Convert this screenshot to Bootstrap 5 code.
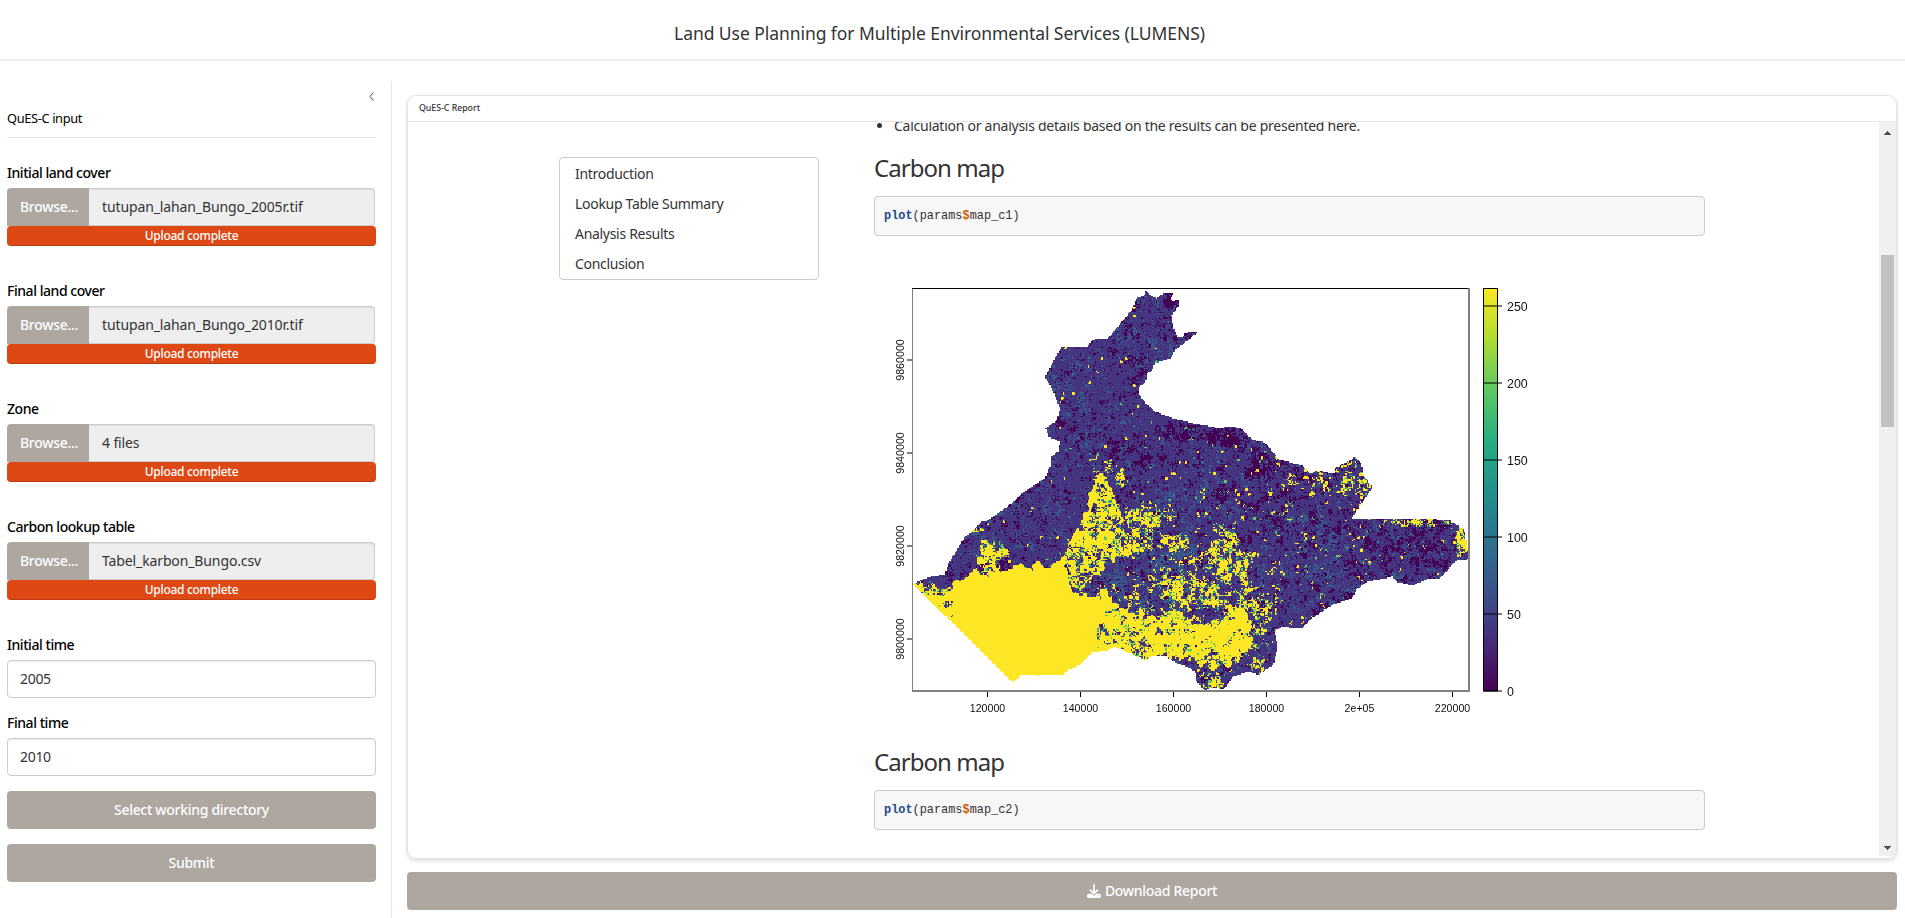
<!DOCTYPE html>
<html lang="en">
<head>
<meta charset="utf-8">
<title>LUMENS</title>
<link href="https://cdn.jsdelivr.net/npm/bootstrap@5.3.0/dist/css/bootstrap.min.css" rel="stylesheet">
<style>
html,body{height:100%;overflow:hidden}
body{font-family:"Noto Sans","Open Sans",sans-serif;font-size:14px;line-height:20px;color:#333;background:#fff;letter-spacing:-.3px}
.app-title{height:61px;padding:7px 26px 0 0;border-bottom:2px solid #e9ecef;font-size:17.5px;letter-spacing:-.06px}
.side{width:392px;margin-top:20px;padding:0 15px 0 7px;border-right:1px solid #e6e6e6;color:#000}
.toggle-row{height:27px;padding:11px 2px 0 0}
.side-title{height:30px;border-bottom:1px solid #e6e6e6;font-size:12.8px;letter-spacing:-.35px;margin-bottom:25px}
.grp{height:118px}
.lbl{font-weight:500;height:25px;line-height:20px;margin:0;letter-spacing:-.45px}
.box{height:38px;border-radius:4px}
.num+.lbl{margin-top:15px}
.browse{width:82px;background:#aea79f;color:#fff;border-radius:4px 0 0 0;font-weight:500;padding-left:13px}
.fname{background:#eee;border:1px solid #ccc;border-left:0;border-radius:0 4px 4px 0;padding-left:13px;color:#333;box-shadow:inset 0 1px 1px rgba(0,0,0,.075);margin-right:1px;letter-spacing:-.12px}
.up{height:20px;border-radius:4px;background:#dd4814;font-size:12px;font-weight:500;line-height:20px;color:#fff;box-shadow:inset 0 -1px 0 rgba(0,0,0,.15)}
.num{border:1px solid #ccc;padding-left:12px;color:#333;box-shadow:inset 0 1px 1px rgba(0,0,0,.075)}
.act{height:38px;margin-top:15px;background:#aea79f;color:#fff;border-radius:4px;font-weight:500;border:0;letter-spacing:inherit;padding:0}
.act.dl{margin-top:13px}
.main{margin:34px 8px 0 15px}
.report{height:764px;border:1px solid #e3e3e3;border-radius:9px;box-shadow:0 2px 4px rgba(0,0,0,.14);overflow:hidden}
.report-head{height:26px;border-bottom:1px solid #e6e6e6;font-size:8.8px;font-weight:500;line-height:24px;padding-left:11px;letter-spacing:-.03px}
.sb{width:17px;background:#f0f0f0;margin-bottom:2px;padding:9px 2px 6px}
.thumb{width:13px;height:172px;background:#c1c1c1;margin-top:120px}
.toc{width:260px;height:123px;border:1px solid #ccc;border-radius:4px;margin:35px 55px 0 151px;padding:1px 0 0 15px}
.toc div{height:30px;line-height:30px}
.doc{width:831px}
.doc ul{height:26px;margin:-6px 0 0;padding-left:20px;letter-spacing:-.26px}
.doc h3{font-size:24px;line-height:28px;height:28px;margin:12px 0 14px;font-weight:400;letter-spacing:-.95px}
.code{height:40px;margin:0;background:#f7f7f7;border:1px solid #ccc;border-radius:4px;padding:9px;font:11.9px/21px "Liberation Mono",monospace;letter-spacing:0;overflow:hidden}
.code b{color:#204a87}.code i{font-style:normal;font-weight:700;color:#ce5c00}
.plot{position:relative;width:700px;height:500px}
.plot canvas{position:absolute;left:38px;top:52px}
.plot svg{position:absolute;left:0;top:0}
.plot text{font-family:"Liberation Sans",Arial,sans-serif;letter-spacing:0;fill:#111}
</style>
</head>
<body class="d-flex flex-column">
<header class="app-title d-flex align-items-center justify-content-center flex-shrink-0">Land Use Planning for Multiple Environmental Services (LUMENS)</header>
<div class="d-flex flex-grow-1">
  <aside class="side flex-shrink-0">
    <div class="toggle-row d-flex justify-content-end"><svg width="5" height="9" viewBox="0 0 5 9" fill="none" stroke="#444"><path d="M4.5.5 .9 4.5l3.6 4"/></svg></div>
    <div class="side-title">QuES-C input</div>
    <div class="grp"><label class="lbl d-block">Initial land cover</label>
      <div class="box d-flex"><div class="browse d-flex align-items-center">Browse...</div><div class="fname d-flex align-items-center flex-grow-1">tutupan_lahan_Bungo_2005r.tif</div></div>
      <div class="up text-center">Upload complete</div></div>
    <div class="grp"><label class="lbl d-block">Final land cover</label>
      <div class="box d-flex"><div class="browse d-flex align-items-center">Browse...</div><div class="fname d-flex align-items-center flex-grow-1">tutupan_lahan_Bungo_2010r.tif</div></div>
      <div class="up text-center">Upload complete</div></div>
    <div class="grp"><label class="lbl d-block">Zone</label>
      <div class="box d-flex"><div class="browse d-flex align-items-center">Browse...</div><div class="fname d-flex align-items-center flex-grow-1">4 files</div></div>
      <div class="up text-center">Upload complete</div></div>
    <div class="grp"><label class="lbl d-block">Carbon lookup table</label>
      <div class="box d-flex"><div class="browse d-flex align-items-center">Browse...</div><div class="fname d-flex align-items-center flex-grow-1">Tabel_karbon_Bungo.csv</div></div>
      <div class="up text-center">Upload complete</div></div>
    <label class="lbl d-block">Initial time</label>
    <div class="box num d-flex align-items-center">2005</div>
    <label class="lbl d-block">Final time</label>
    <div class="box num d-flex align-items-center">2010</div>
    <button class="act w-100 d-block">Select working directory</button>
    <button class="act w-100 d-block">Submit</button>
  </aside>
  <main class="main flex-grow-1">
    <section class="report d-flex flex-column">
      <div class="report-head flex-shrink-0">QuES-C Report</div>
      <div class="d-flex flex-grow-1 overflow-hidden">
        <div class="d-flex flex-grow-1 align-items-start">
          <nav class="toc flex-shrink-0"><div>Introduction</div><div>Lookup Table Summary</div><div>Analysis Results</div><div>Conclusion</div></nav>
          <article class="doc">
            <ul><li>Calculation or analysis details based on the results can be presented here.</li></ul>
            <h3>Carbon map</h3>
            <pre class="code"><b>plot</b>(params<i>$</i>map_c1)</pre>
            <div class="plot">
              <canvas id="raster" width="557" height="403"></canvas>
              <svg id="axes" width="700" height="500"></svg>
            </div>
            <h3>Carbon map</h3>
            <pre class="code"><b>plot</b>(params<i>$</i>map_c2)</pre>
          </article>
        </div>
        <div class="sb d-flex flex-column align-items-center">
          <svg width="7" height="4" viewBox="0 0 7 4" fill="#505050" shape-rendering="crispEdges"><path d="M3.5 0 7 4H0z"/></svg>
          <div class="thumb"></div>
          <svg class="mt-auto" width="7" height="4" viewBox="0 0 7 4" fill="#505050" shape-rendering="crispEdges"><path d="M0 0h7L3.5 4z"/></svg>
        </div>
      </div>
    </section>
    <button class="act dl w-100 d-flex align-items-center justify-content-center"><svg class="me-1" width="14" height="14" viewBox="0 0 512 512" fill="#fff"><path d="M288 32c0-17.700-14.300-32-32-32s-32 14.300-32 32V274.700l-73.400-73.400c-12.500-12.500-32.800-12.500-45.300 0s-12.500 32.800 0 45.300l128 128c12.500 12.500 32.800 12.500 45.300 0l128-128c12.500-12.500 12.500-32.800 0-45.300s-32.800-12.500-45.300 0L288 274.700V32zM64 352c-35.300 0-64 28.700-64 64v32c0 35.300 28.700 64 64 64H448c35.300 0 64-28.700 64-64V416c0-35.300-28.700-64-64-64H346.500l-45.300 45.300c-25 25-65.500 25-90.500 0L165.500 352H64zm368 56a24 24 0 1 1 0 48 24 24 0 1 1 0-48z"/></svg>Download Report</button>
  </main>
</div>
<script src="https://cdn.jsdelivr.net/npm/bootstrap@5.3.0/dist/js/bootstrap.bundle.min.js"></script>
<script>
// Axes and colour scale
(function(){
  const X=38,Y=52;let s='<defs><linearGradient id="vir" x1="0" y1="1" x2="0" y2="0">';
  ['#440154','#472d7b','#3b528b','#2c728e','#21918c','#28ae80','#5ec962','#addc30','#fde725'].forEach((c,i)=>s+=`<stop offset="${i/8}" stop-color="${c}"/>`);
  s+='</linearGradient></defs>';
  s+=`<path d="M${X+.5} ${Y}v403" stroke="#808080"/><path d="M${X} ${Y+.5}h557" stroke="#000"/><path d="M${X+557} ${Y}v404M${X} ${Y+403}h558" stroke="#808080" stroke-width="2"/>`;
  ['120000','140000','160000','180000','2e+05','220000'].forEach((t,i)=>{const x=X+75.5+93*i;s+=`<path d="M${x} ${Y+404}v5" stroke="#000"/><text x="${x}" y="${Y+424}" font-size="10.600" text-anchor="middle">${t}</text>`});
  ['9860000','9840000','9820000','9800000'].forEach((t,i)=>{const y=Y+72+93*i;s+=`<path d="M${X-5} ${y}h5" stroke="#808080" stroke-width="2"/><text transform="translate(${X-8} ${y}) rotate(-90)" font-size="10.700" text-anchor="middle">${t}</text>`});
  s+=`<rect x="${X+571.5}" y="${Y+.5}" width="14" height="402.500" fill="url(#vir)" stroke="#000"/>`;
  [250,200,150,100,50,0].forEach((t,i)=>{const y=Y+18+77*i;s+=`<path d="M${X+572} ${y}h18" stroke="#000" stroke-opacity=".5" stroke-width="2"/><text x="${X+595}" y="${y+4.5}" font-size="12.400">${t}</text>`});
  document.getElementById('axes').innerHTML=s;
})();
// Land cover carbon raster: district outline filled with classed cells
(function(){
  const P=[233.7,2,236.7,6,244.7,10,250.3,6,262,5,258.7,10,259.7,13.3,266.7,11.3,267,16.3,259.7,27.7,261.3,39.3,266.3,49.7,270.7,49.7,272.3,44.7,285.3,44.3,276.3,52,263,62,258.7,70,242.3,75.3,241.3,81.3,235.3,85.3,233.7,93.7,226.7,99.3,226.7,106,234.7,116.3,243,123.3,261.3,130.3,284.7,136,308,140.2,318,138,329,140.3,341.3,152,353,154.3,366.3,171,391.3,178,399,185.7,405.3,182,422.3,186,422.7,180,443,169.3,449.7,176,450.7,186,460.3,199.3,439,231,536.3,231.3,552.3,242,555.7,262,556,271,544,272.7,527.3,290.7,518,290,499.7,297.7,484,293.7,480.7,288,471.3,290.7,454.7,294,444.7,301.5,439.7,310.7,419.7,317,398,331.3,390.7,339.7,369.7,339,362.3,342.7,366,358.7,361.3,377,346.3,387,337.3,383.3,321.3,388.7,311.3,401.3,299.7,399.3,292.3,402.7,284.7,393.7,283,383.7,274,378,264.7,375.3,253,368,239.7,368,234,372,218,365.3,202.3,358.7,193,363,180.7,363.7,168,377,154.7,382.7,151.3,387,141.3,386,126.3,387.3,108,386,106.3,390.3,100.3,393.7,.7,296,16.3,289,33,286,36.3,275.3,52,250.3,69.7,233.7,74.7,233,99.7,215.3,109.7,205.3,133,189.7,138,178.7,138,169.3,146.3,163,148,154,136.3,148.7,133.7,140.3,144.7,132,148,120.3,139.7,100.3,133,88.7,143,70.3,149.7,58.7,175.3,58.7,180.3,51.3,195.3,51,219.7,22,224.7,10.3,233,7];
  const poly=a=>{const p=new Path2D();for(let i=0;i<a.length;i+=2)p.lineTo(a[i],a[i+1]);p.closePath();return p};
  const outline=poly(P);
  const solid=poly([-10,290,14,297,36,302,46,292,58,286,62,283,76,287,80,282,95,284,104,275,112,278,116,282,128,272,134,279,144,277,151,268,154,262,152,282,158,297,165,307,184,309,190,325,184,345,188,372,176,400,100,410,-10,300]);
  const tower=poly([184,186,192,183,198,195,203,213,211,230,206,250,222,268,196,272,190,284,168,300,155,292,150,286,154,262,164,240,176,218]);
  const band=poly([183,309,193,300,204,316,220,322,240,330,262,322,285,336,305,332,330,318,338,342,340,362,320,376,298,382,276,370,250,372,236,380,200,368,183,370]);
  const cv=document.getElementById('raster'),g=cv.getContext('2d');
  const h=(x,y,s)=>{let n=Math.imul(x|0,374761393)+Math.imul(y|0,668265263)+Math.imul(s,1442695041)|0;n=Math.imul(n^n>>>13,1274126177);n^=n>>>16;n=Math.imul(n,2246822519);return((n^n>>>13)>>>0)/4294967296};
  const vn=(x,y,s)=>{const a=Math.floor(x),b=Math.floor(y);let u=x-a,v=y-b;u=u*u*(3-2*u);v=v*v*(3-2*v);return(h(a,b,s)*(1-u)+h(a+1,b,s)*u)*(1-v)+(h(a,b+1,s)*(1-u)+h(a+1,b+1,s)*u)*v};
  const noise=(x,y,s)=>.35*vn(x/7,y/7,s)+.35*vn(x/3,y/3,s+1)+.3*h(x/1.4,y/1.4,s+2);
  const q=p=>p<=0?0:p>=1?1:.5+.083*Math.log(p/(1-p));
  const bl=(x,y,L)=>L.reduce((m,[a,b,c,d,e])=>{const r=((x-a)/c)**2+((y-b)/d)**2;return Math.max(m,e*Math.exp(-r*r*.7))},0);
  const Yb=[[271,302,22,18,.62],[296,305,11,12,.72],[311,266,15,26,.5],[328,282,10,11,.7],[261,254,14,8,.65],[243,230,18,12,.45],[220,240,18,24,.4],[331,325,25,22,.5],[293,394,13,9,.7],[280,295,80,60,.1],[76,270,9,15,.75],[87,263,7,7,.7],[442,190,25,30,.12],[505,234,30,4,.5],[549,255,5,13,.6],[395,200,45,30,.07],[190,178,12,9,.2],[345,360,15,24,.13],[62,242,9,2,.7],[118,220,3,3,.6],[209,190,5,8,.5]];
  const Db=[[259,10,8,10,.8],[215,70,20,8,.3],[265,143,22,9,.55],[308,150,24,9,.8],[322,151,14,6,.6],[210,165,20,14,.4],[350,178,18,14,.65],[370,190,70,40,.27],[490,262,60,40,.3],[400,230,60,40,.22],[146,135,6,10,.6],[225,175,12,25,.3],[80,280,30,8,.3]];
  const Bb=[[230,60,35,18,.22],[160,100,25,40,.2],[180,150,18,12,.3],[395,245,40,22,.33],[415,270,30,20,.3],[264,278,30,18,.6],[210,290,60,50,.25],[290,220,60,50,.17],[345,300,30,40,.2]];
  const C=4/3,R=Math.round;
  for(let j=0;j*C<403;j++)for(let i=0;i*C<557;i++){
    const x=i*C,y=j*C,cx=x+.6,cy=y+.6;
    if(!g.isPointInPath(outline,cx,cy))continue;
    let py=Math.max(bl(x,y,Yb),x>250&&y>130?.02:.006),c='#453581';
    const wx=cx+5*(vn(x/5,y/5,71)-.5),wy=cy+9*(vn(x/4,y/6,72)-.5);
    if(g.isPointInPath(tower,wx,wy))py=Math.max(py,.7);
    if(g.isPointInPath(band,wx,wy))py=Math.max(py,.84);
    if(g.isPointInPath(solid,wx,wy))py=x<44&&y<338?.84:1;
    const n=noise(x,y,3),sc=h(i>>1,j>>1,91),east=x>225&&y>140&&x<460;
    if(n<q(py)){c='#fde725';if(py<1&&n>q(py)-.012)c='#5ec962'}
    else if(py>.1&&n<q(py)+.03)c=h(i,j,9)<.6?'#5ec962':'#21918c';
    else if(sc<(east?.036:.009)&&h(i,j,92)<.6)c=h(i>>1,j>>1,93)<.8?'#fde725':'#5ec962';
    else if(noise(x,y,23)<q(Math.max(.1,bl(x,y,Db)))||h(i,j,56)<.035)c='#440154';
    else if(noise(x,y,43)<q(Math.max(.1,bl(x,y,Bb)))||h(i,j,57)<.03)c='#38588c';
    else if(h(i,j,55)<.006)c='#21918c';
    g.fillStyle=c;g.fillRect(R(x),R(y),R(x+C)-R(x),R(y+C)-R(y));
  }
  // lake near the southern edge
  g.fillStyle='#453581';g.fill(poly([225,353,232,354,237,359,231,358]));
})();
</script>
</body>
</html>
